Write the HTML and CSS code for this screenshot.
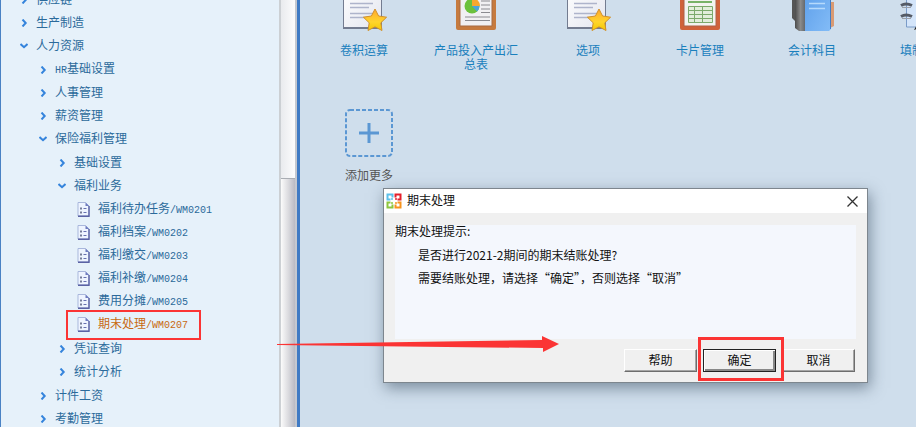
FILE: index.html
```html
<!doctype html>
<html lang="zh">
<head>
    <meta charset="UTF-8">
    <meta name="viewport" content="width=device-width, initial-scale=1.0">
    <title>期末处理</title>
    <link rel="stylesheet" href="styles.css">
</head>
<body>
<svg class="defs" aria-hidden="true">
    <defs>
        <linearGradient id="paper" x1="0" y1="0" x2="1" y2="1">
            <stop offset="0" stop-color="#fff"/>
            <stop offset="1" stop-color="#e4e6ef"/>
        </linearGradient>
        <linearGradient id="gold" x1="0" y1="0" x2="0" y2="1">
            <stop offset="0" stop-color="#ffa62e"/>
            <stop offset=".6" stop-color="#ffd52c"/>
            <stop offset="1" stop-color="#f3c800"/>
        </linearGradient>
        <linearGradient id="blue" x1="0" y1="0" x2="1" y2="1">
            <stop offset="0" stop-color="#5b9de9"/>
            <stop offset="1" stop-color="#83bcf7"/>
        </linearGradient>
        <linearGradient id="dark" x1="0" y1="0" x2="1" y2="0">
            <stop offset="0" stop-color="#4c4c4c"/>
            <stop offset=".5" stop-color="#8b8b8b"/>
            <stop offset="1" stop-color="#5c6269"/>
        </linearGradient>
    </defs>
    <symbol id="right" viewBox="0 0 8 8"><path d="M2.5 .5 5.7 4 2.5 7.5" fill="none" stroke="#3584dc" stroke-width="2"/></symbol>
    <symbol id="down" viewBox="0 0 8 8"><path d="M.5 2 4 5.2 7.5 2" fill="none" stroke="#3584dc" stroke-width="2"/></symbol>
    <symbol id="doc" viewBox="0 0 13 15">
        <path d="M1 .5h7.500L12 4v10H1z" fill="#eef4ff" stroke="#a9b7dc"/>
        <path d="M12 4v10.300H1" fill="none" stroke="#5a62a4" stroke-width="1.400"/>
        <path d="M8.500 .5V4H12z" fill="#6f7cc0"/>
        <path d="M6.500 6.500H9.500M6.500 10.500H9.500" stroke="#6670b0"/>
        <path d="M3 5.500h2v2H3zM3 9.500h2v2H3z" fill="#747c98"/>
    </symbol>
    <symbol id="note" viewBox="0 0 48 48">
        <path d="M3 0h39v45H3z" fill="#737c90"/>
        <path d="M4 0h37v43H4z" fill="url(#paper)"/>
        <path d="M10 19.500h23M10 23.500h19M10 29.500h23M10 33.500h17" stroke="#aeb4cb" stroke-width="1.500"/>
        <path d="M35 25l3.600 7 8 1.200-5.800 5.600 1.200 7.700-7-3.700-7 3.700 1.200-7.700-5.800-5.600 8-1.200z" fill="url(#gold)" stroke="#d0902c" stroke-linejoin="round"/>
    </symbol>
</svg>

<div class="app">
    <nav class="side">
        <ul class="tree">
            <li><a href="#"><svg class="arrow"><use href="#right"/></svg>供应链</a></li>
            <li><a href="#"><svg class="arrow"><use href="#right"/></svg>生产制造</a></li>
            <li><a href="#"><svg class="arrow"><use href="#down"/></svg>人力资源</a>
                <ul>
                    <li><a href="#"><svg class="arrow"><use href="#right"/></svg><span><span class="code">HR</span>基础设置</span></a></li>
                    <li><a href="#"><svg class="arrow"><use href="#right"/></svg>人事管理</a></li>
                    <li><a href="#"><svg class="arrow"><use href="#right"/></svg>薪资管理</a></li>
                    <li><a href="#"><svg class="arrow"><use href="#down"/></svg>保险福利管理</a>
                        <ul>
                            <li><a href="#"><svg class="arrow"><use href="#right"/></svg>基础设置</a></li>
                            <li><a href="#"><svg class="arrow"><use href="#down"/></svg>福利业务</a>
                                <ul>
                                    <li><a href="#"><svg class="doc"><use href="#doc"/></svg><span>福利待办任务<span class="code">/WM0201</span></span></a></li>
                                    <li><a href="#"><svg class="doc"><use href="#doc"/></svg><span>福利档案<span class="code">/WM0202</span></span></a></li>
                                    <li><a href="#"><svg class="doc"><use href="#doc"/></svg><span>福利缴交<span class="code">/WM0203</span></span></a></li>
                                    <li><a href="#"><svg class="doc"><use href="#doc"/></svg><span>福利补缴<span class="code">/WM0204</span></span></a></li>
                                    <li><a href="#"><svg class="doc"><use href="#doc"/></svg><span>费用分摊<span class="code">/WM0205</span></span></a></li>
                                    <li><a href="#" class="active"><svg class="doc"><use href="#doc"/></svg><span>期末处理<span class="code">/WM0207</span></span></a></li>
                                </ul>
                            </li>
                            <li><a href="#"><svg class="arrow"><use href="#right"/></svg>凭证查询</a></li>
                            <li><a href="#"><svg class="arrow"><use href="#right"/></svg>统计分析</a></li>
                        </ul>
                    </li>
                    <li><a href="#"><svg class="arrow"><use href="#right"/></svg>计件工资</a></li>
                    <li><a href="#"><svg class="arrow"><use href="#right"/></svg>考勤管理</a></li>
                </ul>
            </li>
        </ul>
        <div class="scrollbar"><div class="thumb"></div></div>
    </nav>

    <main class="desk">
        <div class="apps">
            <a href="#"><svg viewBox="0 0 48 48"><use href="#note"/></svg><span>卷积运算</span></a>
            <a href="#">
                <svg viewBox="0 0 48 48">
                    <path d="M4 0h40v44q0 2-2 2H6q-2 0-2-2z" fill="#c67a3e"/>
                    <path d="M8 0h32v42H8z" fill="#f1f0f2" stroke="#a66a42"/>
                    <circle cx="20" cy="22" r="7.500" fill="#6cc13c"/>
                    <path d="M20 22v-8a8 8 0 0 1 8 8z" fill="#f7a72e"/>
                    <path d="M20 22h7.500a7.500 7.500 0 0 1-2.500 5.500z" fill="#4ba4dc"/>
                    <path d="M29 17h9M29 21h9M29 25h9M29 28.500h9M13 33h25M13 36.500h25" stroke="#8b8b90"/>
                </svg>
                <span>产品投入产出汇总表</span>
            </a>
            <a href="#"><svg viewBox="0 0 48 48"><use href="#note"/></svg><span>选项</span></a>
            <a href="#">
                <svg viewBox="0 0 48 48">
                    <path d="M4 0h40v44q0 2-2 2H6q-2 0-2-2z" fill="#d0623a"/>
                    <path d="M8 0h32v42H8z" fill="#f3f3f0" stroke="#ad6048"/>
                    <path d="M12 18h24" stroke="#78b268" stroke-width="2"/>
                    <path d="M12.500 22.500h24v16h-24zM12.500 26.500h24M12.500 30.500h24M12.500 34.500h24M18.500 22.500v16M26.500 22.500v16" fill="#e2eedb" stroke="#7caa6c"/>
                </svg>
                <span>卡片管理</span>
            </a>
            <a href="#">
                <svg viewBox="0 0 48 48">
                    <path d="M4 0h8v39l-4-1-4-4z" fill="#555"/>
                    <path d="M38 18h8v24l-4 2h-4z" fill="#d99a73"/>
                    <path d="M7 0h11v47h-7l-4-3z" fill="url(#dark)"/>
                    <path d="M17 0h26v45l-2 2H17z" fill="url(#blue)"/>
                    <path d="M42.500 0v45" stroke="#427cc4"/>
                    <path d="M21 19.500h16M21 24.500h16" stroke="#b6dafc" stroke-width="1.500"/>
                </svg>
                <span>会计科目</span>
            </a>
            <a href="#">
                <svg viewBox="0 0 48 48">
                    <path d="M6.500 0h38v43h-38z" fill="#d4e5fa" stroke="#7a9bc8"/>
                    <path d="M1 21.500q5-3 11 0M1 32.500q5-3 11 0" fill="none" stroke="#555b66" stroke-width="3"/>
                    <path d="M2 23.500h9M2 34.500h9" stroke="#9aa0aa"/>
                    <path d="M14 46l4-7 4 4z" fill="#222"/>
                </svg>
                <span>填制凭证</span>
            </a>
        </div>
        <button class="add" type="button">
            <svg viewBox="0 0 48 48">
                <rect x="1" y="1" width="46" height="46" rx="4" fill="none" stroke="#5b97d3" stroke-width="2" stroke-dasharray="4 2"/>
                <path d="M24 14v20M14 24h20" stroke="#5b97d3" stroke-width="3"/>
            </svg>
            <span>添加更多</span>
        </button>
    </main>
</div>

<section class="dialog" role="dialog" aria-labelledby="dialog-title">
    <header>
        <svg class="logo" viewBox="0 0 16 16" fill="none" stroke-width="2">
            <path d="M4.500 6.500H1.500v-5h5v3" stroke="#5cc0ea"/>
            <path d="M9.500 4.500v-3h5v5h-3" stroke="#e3202c"/>
            <path d="M4.500 9.500h-3v5h5v-3" stroke="#8cc63e"/>
            <path d="M11.500 9.500h3v5h-5v-3" stroke="#f7931d"/>
            <path d="M5.500 5.500h1v1h-1z" stroke="#5cc0ea" stroke-width="1"/>
            <path d="M9.500 5.500h1v1h-1z" stroke="#e3202c" stroke-width="1"/>
            <path d="M5.500 9.500h1v1h-1z" stroke="#8cc63e" stroke-width="1"/>
            <path d="M9.500 9.500h1v1h-1z" stroke="#f7931d" stroke-width="1"/>
        </svg>
        <h1 id="dialog-title">期末处理</h1>
        <button class="close" type="button" aria-label="关闭">
            <svg viewBox="0 0 11 11"><path d="M.5 .5l10 10M10.500 .5l-10 10" stroke="#333" stroke-width="1.300"/></svg>
        </button>
    </header>
    <div class="message">
        <p>期末处理提示:</p>
        <p class="line">是否进行2021-2期间的期末结账处理?</p>
        <p class="line">需要结账处理，请选择“确定”，否则选择“取消”</p>
    </div>
    <footer>
        <button type="button">帮助</button>
        <button type="button" class="ok">确定</button>
        <button type="button">取消</button>
    </footer>
</section>

<svg class="pointer" viewBox="0 0 282 16" aria-hidden="true">
    <path d="M0 8 265 4V0l17 8-16 8v-4L0 9z" fill="#fb3434"/>
</svg>
</body>
</html>
```
FILE: styles.css
```css
*{margin: 0;padding: 0;box-sizing: border-box}
body{
    font: 12px/14px "Liberation Sans", "Noto Sans CJK SC", sans-serif;
    background: #cfdeec;
    overflow: hidden;
}
a{text-decoration: none}
ul{list-style: none}
button{font: inherit;color: inherit}
.defs{position: absolute;width: 0;height: 0}
.app{display: flex;height: 100vh;overflow: hidden}

/* left menu */
.side{
    display: flex;
    flex: none;
    width: 300px;
    background: #e6f1fa;
    border-left: 1px solid #4a82c4;
    border-right: 3px solid #3f7ac4;
}
.tree{flex: 1;margin-top: -12px;padding-left: 19px}
.tree ul{padding: 1px 0 1px 19px}
.tree a{
    display: flex;
    align-items: center;
    gap: 8px;
    height: 23px;
    color: #2b6a9b;
    white-space: nowrap;
}
.code{font-family: "Liberation Mono", monospace;font-size: 10px}
.arrow{width: 8px;height: 8px;flex: none}
.doc{width: 13px;height: 15px;flex: none}
.tree .active{position: relative;color: #c8690f}
.active::after{
    content: "";
    position: absolute;
    box-sizing: border-box;
    top: -3px;
    left: -11px;
    width: 135px;
    height: 30px;
    border: 2px solid #fb3434;
}
.scrollbar{
    width: 18px;
    padding-top: 178px;
    border-left: 2px solid #ccd0d4;
    border-right: 2px solid #c4c8d0;
    background: linear-gradient(90deg, #e9ebee, #fcfcfd);
}
.thumb{
    height: 100%;
    border-top: 1px solid #a9adb3;
    background: linear-gradient(90deg, #fbfbfb, #dcdce0 50%, #b9bac4);
}

/* shortcuts */
.desk{flex: 1;min-width: 0;overflow: hidden}
.apps{display: flex;gap: 24px;margin-top: -16px;padding-left: 20px}
.apps a, .add{
    display: flex;
    flex: none;
    flex-direction: column;
    align-items: center;
    gap: 12px;
    width: 88px;
    color: #1a80bd;
    text-align: center;
}
.apps svg, .add svg{width: 48px;height: 48px}
.add{margin: 37px 0 0 25px;border: 0;background: none;color: #555}

/* dialog */
.dialog{
    position: absolute;
    top: 188px;
    left: 383px;
    width: 485px;
    border: 1px solid #7d868e;
    background: #f0f0f0;
    box-shadow: 2px 5px 14px rgba(40, 60, 80, .5);
    color: #111;
}
.dialog header{display: flex;align-items: center;gap: 5px;height: 24px;padding: 0 9px 0 2px;background: #fff}
.dialog h1{flex: 1;font-size: 12px;font-weight: normal}
.logo{width: 16px;height: 16px}
.close{display: flex;border: 0;background: none}
.close svg{width: 11px;height: 11px}
.message{
    height: 114px;
    margin: 12px 11px 10px;
    background: #f4f7fd;
    font-family: "Noto Sans CJK SC", sans-serif;
}
.message p{line-height: 23px;height: 23px}
.message p:first-child{height: 18px;line-height: 12px}
.message .line{padding-left: 23px}
.dialog footer{display: flex;justify-content: flex-end;gap: 6px;padding: 0 12px 10px}
.dialog footer button{
    width: 73px;
    height: 23px;
    border: 1px solid;
    border-color: #fff #6d6d6d #6d6d6d #fff;
    box-shadow: inset -1px -1px #a5a5a5;
    background: #f0f0f0;
}
.dialog footer .ok{position: relative;border-color: #222;box-shadow: inset 1px 1px #fff, inset -2px -2px #888}
.ok::after{
    content: "";
    position: absolute;
    inset: -13px -9px -10px -6px;
    border: 3px solid #fb3434;
}

.pointer{position: absolute;top: 336px;left: 277px;width: 282px;height: 16px}
```
